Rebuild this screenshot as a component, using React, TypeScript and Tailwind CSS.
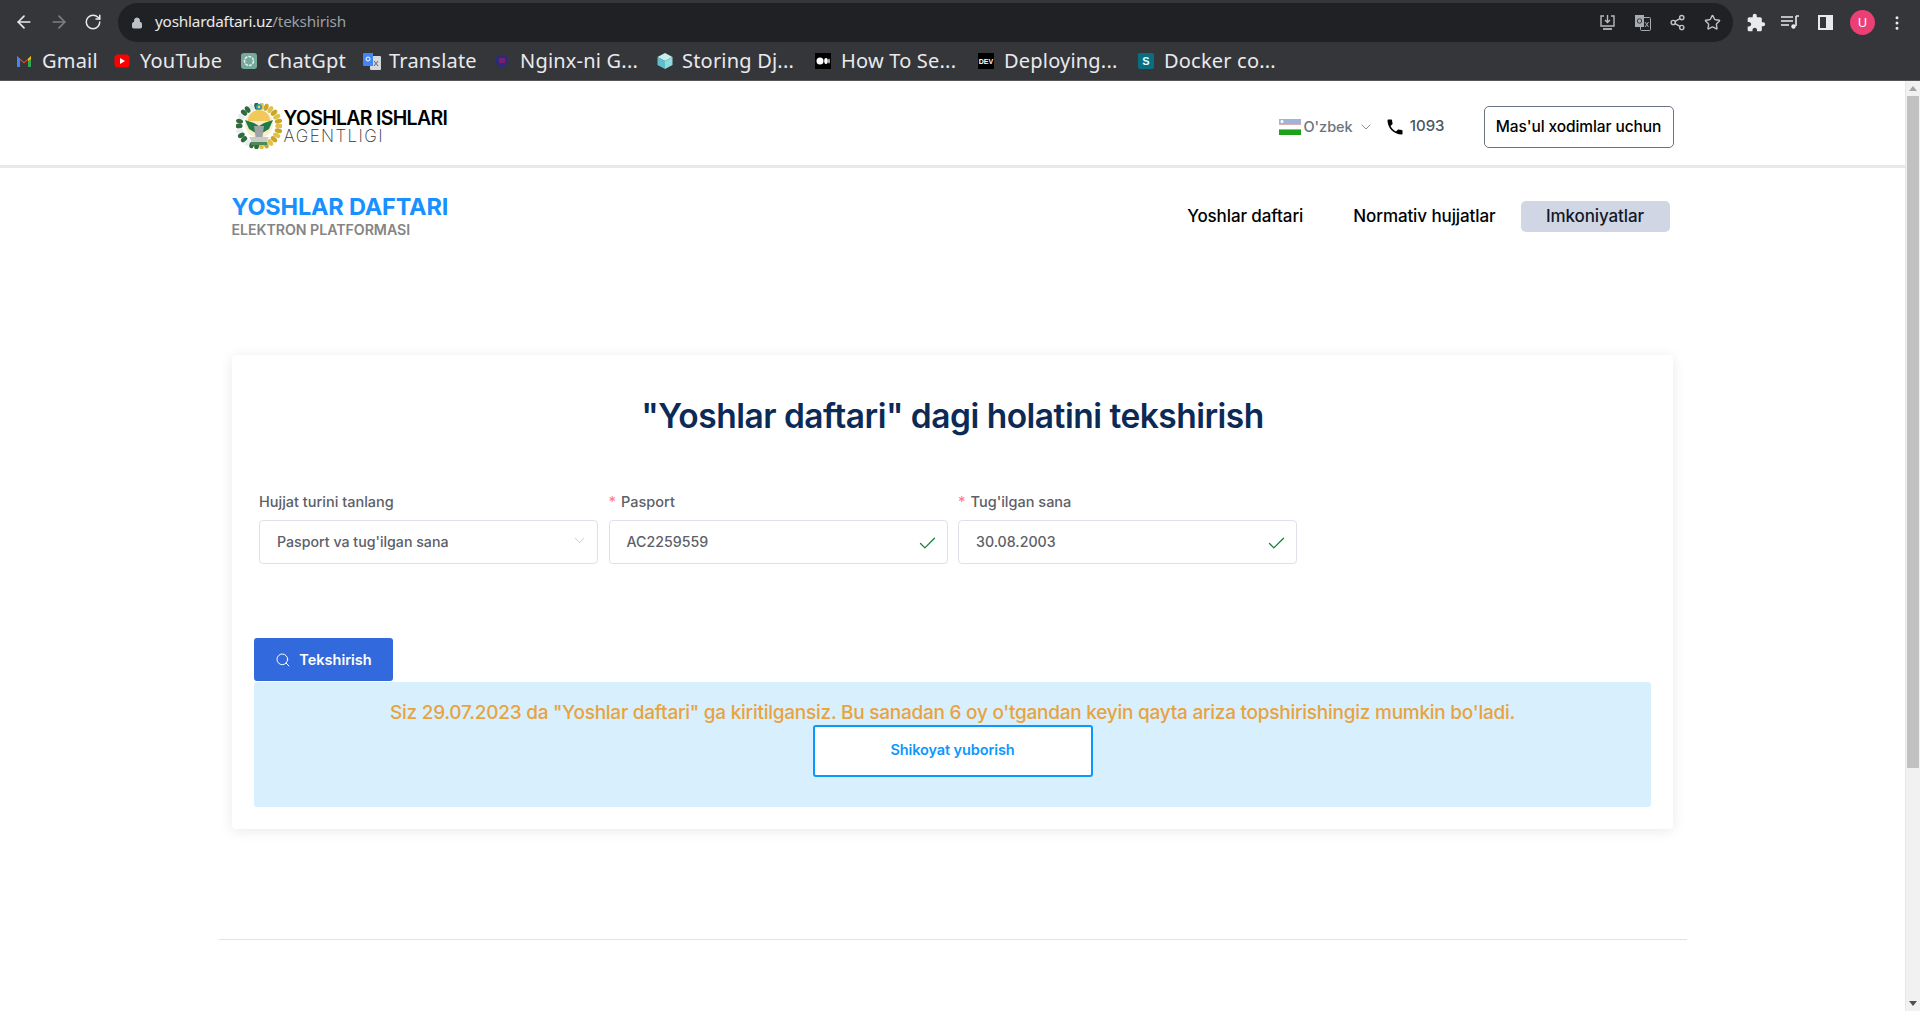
import { ArrowLeft, ArrowRight, RotateCw, Lock, Share2, Star, MoreVertical, ChevronDown, Search, Check } from 'lucide-react';
import { MdPhone, MdExtension } from 'react-icons/md';

/* ── Browser chrome ── */
const BOOKMARKS = [
  { label: 'Gmail', icon: <GmailIcon />, w: 'w-[98px]' },
  { label: 'YouTube', icon: <YoutubeIcon />, w: 'w-[127px]' },
  { label: 'ChatGpt', icon: <GptIcon />, w: 'w-[122px]' },
  { label: 'Translate', icon: <TranslateIcon />, w: 'w-[131px]' },
  { label: 'Nginx-ni G...', icon: <NginxIcon />, w: 'w-[162px]' },
  { label: 'Storing Dj...', icon: <CubeIcon />, w: 'w-[159px]' },
  { label: 'How To Se...', icon: <MediumIcon />, w: 'w-[163px]' },
  { label: 'Deploying...', icon: <DevIcon />, w: 'w-[160px]' },
  { label: 'Docker co...', icon: <StoringIcon />, w: 'w-[150px]' },
];

function GmailIcon() {
  return (
    <svg width="16" height="14" viewBox="0 0 16 14">
      <path d="M1 13V2l7 6 7-6v11h-3V6L8 9.5 4 6v7z" fill="#ea4335" />
      <path d="M1 13V2l3 3v8z" fill="#4285f4" />
      <path d="M15 13V2l-3 3v8z" fill="#34a853" />
      <path d="M12 5l3-3v3l-3 2z" fill="#fbbc04" />
    </svg>
  );
}

function YoutubeIcon() {
  return (
    <svg width="16" height="14" viewBox="0 0 16 14">
      <rect x="0.5" y="0.5" width="15" height="13" rx="3.5" fill="#f00" />
      <path d="M6 4l5 3-5 3z" fill="#fff" />
    </svg>
  );
}

function GptIcon() {
  return (
    <svg width="16" height="16" viewBox="0 0 16 16">
      <rect width="16" height="16" rx="3" fill="#74aa9c" />
      <circle cx="8" cy="8" r="4.5" fill="none" stroke="#e4efec" strokeWidth="1.6" strokeDasharray="3 1" />
    </svg>
  );
}

function TranslateIcon() {
  return (
    <svg width="18" height="17" viewBox="0 0 18 17">
      <rect x="7" y="3" width="11" height="14" rx="1" fill="#d5d8dc" />
      <path d="M1 0h9v13H1a1 1 0 0 1-1-1V1a1 1 0 0 1 1-1z" fill="#4285f4" />
      <circle cx="5" cy="6" r="2" fill="none" stroke="#fff" strokeWidth="1" />
      <path d="M11 8l4 5M15 8l-4 5" stroke="#5f6368" strokeWidth="1" />
    </svg>
  );
}

function NginxIcon() {
  return (
    <svg width="16" height="16" viewBox="0 0 16 16">
      <path d="M8 2c3 0 6 1.500 6 5s-2 7-6 7-6-3-6-7 3-5 6-5z" fill="#2b2a80" />
      <rect x="5" y="5" width="6" height="5" fill="#7a1f6e" />
    </svg>
  );
}

function CubeIcon() {
  return (
    <svg width="18" height="18" viewBox="0 0 18 18">
      <path d="M9 1l7.500 4L9 9 1.500 5z" fill="#c9eef0" />
      <path d="M1.500 5L9 9v8l-7.500-4z" fill="#5cc1cc" />
      <path d="M16.500 5L9 9v8l7.500-4z" fill="#8fdbe0" />
    </svg>
  );
}

function MediumIcon() {
  return (
    <svg width="16" height="16" viewBox="0 0 16 16">
      <rect width="16" height="16" fill="#000" />
      <ellipse cx="5" cy="8" rx="3.500" ry="3.500" fill="#fff" />
      <ellipse cx="11" cy="8" rx="1.800" ry="3" fill="#fff" />
      <ellipse cx="14" cy="8" rx="0.700" ry="2.500" fill="#fff" />
    </svg>
  );
}

function DevIcon() {
  return (
    <div className="flex h-[16px] w-[16px] items-center justify-center bg-black font-['Liberation_Sans',sans-serif] text-[7px] font-bold leading-none text-white">
      DEV
    </div>
  );
}

function StoringIcon() {
  return (
    <div className="flex h-[16px] w-[16px] items-center justify-center rounded-[2px] bg-[#0b6e80] font-['Liberation_Sans',sans-serif] text-[11px] font-bold leading-none text-[#dff]">
      S
    </div>
  );
}

function InstallIcon() {
  return (
    <svg width="17" height="17" viewBox="0 0 17 17" fill="none" stroke="#b6b9bd" strokeWidth="1.400">
      <path d="M5 2H2v10h13V2h-3" />
      <path d="M8.500 1v7M6 6l2.500 2.500L11 6" />
      <path d="M4 15h9" strokeWidth="1.800" />
    </svg>
  );
}

function TranslatePageIcon() {
  return (
    <svg width="17" height="17" viewBox="0 0 17 17">
      <rect x="6.500" y="3.500" width="10" height="13" rx="1" fill="none" stroke="#a8abaf" strokeWidth="1" />
      <path d="M1 1h9v12H1z" fill="#a8abaf" />
      <circle cx="5.500" cy="7" r="2.200" fill="none" stroke="#35363a" strokeWidth="1" />
      <path d="M11 8l3.500 5M14.500 8L11 13" stroke="#a8abaf" strokeWidth="1" />
    </svg>
  );
}

function MediaIcon() {
  return (
    <svg width="18" height="15" viewBox="0 0 18 15" fill="none" stroke="#e8eaed" strokeWidth="1.600">
      <path d="M0 2h12M0 6h12M0 10h8" />
      <path d="M15 1h3M15 1v10" />
      <circle cx="12.500" cy="11.500" r="2.200" fill="#e8eaed" stroke="none" />
    </svg>
  );
}

function BrowserChrome() {
  return (
    <div className="h-[81px] shrink-0 border-b border-[#55565a] bg-[#35363a] font-['Noto_Sans',sans-serif]">
      <div className="flex h-[42px] items-center pt-[3px]">
        <div className="mt-[-2px] flex w-[118px] shrink-0 items-center gap-[15px] pl-[14px]">
          <ArrowLeft size={20} color="#e8eaed" />
          <ArrowRight size={20} color="#7d7f83" />
          <RotateCw size={18} color="#e8eaed" />
        </div>
        <div className="flex h-[39px] w-[1615px] shrink-0 items-center rounded-full bg-[#202124] pl-[13px] pr-[12px]">
          <Lock size={12} color="#bdc1c6" fill="#bdc1c6" />
          <span className="ml-[12px] mt-[-2px] text-[15.300px] tracking-[-0.2px] text-[#e8eaed]">
            yoshlardaftari.uz<span className="text-[#9aa0a6]">/tekshirish</span>
          </span>
          <div className="ml-auto flex items-center gap-[18px]">
            <InstallIcon />
            <TranslatePageIcon />
            <Share2 size={17} color="#bdc1c6" />
            <Star size={17} color="#bdc1c6" />
          </div>
        </div>
        <div className="flex flex-1 items-center pl-[13px]">
          <MdExtension size={20} color="#e8eaed" />
          <div className="ml-[15px]"><MediaIcon /></div>
          <div className="ml-[19px] h-[15px] w-[15px] border-[2px] border-r-[7px] border-[#e8eaed]" />
          <div className="ml-[17px] flex h-[25px] w-[25px] items-center justify-center rounded-full bg-[#ec3f76] text-[13px] text-white">U</div>
          <MoreVertical size={18} color="#e8eaed" className="ml-[13px]" />
        </div>
      </div>
      <div className="flex h-[38px] items-center pl-[16px]">
        {BOOKMARKS.map(b => (
          <div key={b.label} className={`flex items-center ${b.w}`}>
            <span className="flex w-[26px] shrink-0 items-center">{b.icon}</span>
            <span className="whitespace-nowrap text-[20px] leading-none tracking-[0.2px] text-[#e8eaed]">{b.label}</span>
          </div>
        ))}
      </div>
    </div>
  );
}

/* ── Site header ── */
const LEAVES = Array.from({ length: 13 }, (_, i) => {
  const a = (Math.PI * (i + 0.5)) / 13;
  return { dx: Math.sin(a) * 20, y: 23 - Math.cos(a) * 20, rot: (a * 180) / Math.PI };
});

function Emblem() {
  return (
    <svg width="46" height="46" viewBox="0 0 46 46">
      {LEAVES.map((l, i) => (
        <g key={i}>
          <ellipse cx={23 - l.dx} cy={l.y} rx="3.600" ry="2.400" fill={i % 3 === 1 ? '#e8ecef' : '#2f6b3c'} transform={`rotate(${-l.rot + 90} ${23 - l.dx} ${l.y})`} />
          <ellipse cx={23 + l.dx} cy={l.y} rx="3.800" ry="2.300" fill={i % 2 ? '#caa52c' : '#e0c14a'} transform={`rotate(${l.rot - 90} ${23 + l.dx} ${l.y})`} />
        </g>
      ))}
      <circle cx="23" cy="21" r="14" fill="#f8eec9" />
      <path d="M12 18a11 11 0 0 1 22 0z" fill="#f3c85a" />
      <path d="M9 17l9 3 5 3 5-3 9-3-4 9-10 6-10-6z" fill="#1f7a46" />
      <path d="M18 23h10l-1.500 11h-7z" fill="#9fa3a5" />
      <path d="M13 34h20l-3 5H16z" fill="#c8ccc9" />
      <path d="M15 39h16v3H15z" fill="#4f8a55" />
      <circle cx="23" cy="4" r="3" fill="#2f9bb3" />
      <circle cx="23" cy="4" r="1.200" fill="#f2d874" />
    </svg>
  );
}

function UzFlag() {
  return (
    <svg width="22" height="16" viewBox="0 0 22 16">
      <rect width="22" height="5.500" fill="#9fb4dc" />
      <rect y="5.500" width="22" height="5" fill="#fff" />
      <rect y="5" width="22" height="0.700" fill="#d59a9a" />
      <rect y="10" width="22" height="0.700" fill="#d59a9a" />
      <rect y="10.700" width="22" height="5.300" fill="#1aa31a" />
      <circle cx="3" cy="2.500" r="1.500" fill="#fff" />
    </svg>
  );
}

function TopHeader() {
  return (
    <div className="h-[87px] shrink-0 border-b-[3px] border-[#e8e8e8]">
      <div className="mx-auto flex h-full w-[1442px] items-center">
        <div className="ml-[4px] mt-[5px] flex items-center">
          <Emblem />
          <div className="ml-[2px] mt-[2px] flex flex-col">
            <span className="text-[19.500px] font-semibold leading-[19px] tracking-[-0.7px] text-black">YOSHLAR ISHLARI</span>
            <span className="text-[17px] font-extralight leading-[17px] tracking-[1.400px] text-[#333]">AGENTLIGI</span>
          </div>
        </div>
        <div className="ml-auto mt-[8px] flex items-center">
          <UzFlag />
          <span className="ml-[2px] text-[14.500px] font-medium text-[#6b7280]">O'zbek</span>
          <ChevronDown size={16} color="#8a8f98" strokeWidth={1.500} className="ml-[5px]" />
          <MdPhone size={20} color="#000" className="ml-[11px]" />
          <span className="ml-[5px] mt-[-2px] text-[15px] font-medium text-[#4b5563]">1093</span>
          <button className="ml-[39px] h-[42px] w-[190px] rounded-[5px] border border-[#6b7280] bg-white text-[15.500px] font-medium tracking-[-0.1px] text-black">
            Mas'ul xodimlar uchun
          </button>
        </div>
      </div>
    </div>
  );
}

function NavBar() {
  return (
    <div className="mx-auto flex h-[75px] w-[1442px] items-start pt-[25px]">
      <div className="flex flex-col">
        <span className="text-[23.500px] font-bold leading-[28px] tracking-[-0.2px] text-[#1890ff]">YOSHLAR DAFTARI</span>
        <span className="text-[14.200px] font-semibold leading-[18px] tracking-[-0.05px] text-[#858585]">ELEKTRON PLATFORMASI</span>
      </div>
      <div className="ml-auto mr-[4px] mt-[8px] flex items-center text-[17px] font-medium tracking-[-0.1px] text-black">
        <span className="mr-[50px]">Yoshlar daftari</span>
        <span className="mr-[25px]">Normativ hujjatlar</span>
        <span className="flex h-[31px] w-[149px] items-center justify-center rounded-[5px] bg-[#d1d6e4] text-[#111827]">Imkoniyatlar</span>
      </div>
    </div>
  );
}

/* ── Check form ── */
function Field({ label, value, required, select }: { label: string; value: string; required?: boolean; select?: boolean }) {
  return (
    <div className="w-[339px] shrink-0">
      <div className="mb-[9px] h-[18px] text-[14.500px] font-medium leading-[18px] text-[#5c6068]">
        {required && <span className="mr-[5px] text-[#ff7d85]">*</span>}
        {label}
      </div>
      <div className="flex h-[44px] items-center rounded-[4px] border border-[#dfe1ea] bg-white pl-[17px] pr-[9px] text-[14.200px] font-medium text-[#5c6068]">
        <span>{value}</span>
        {select
          ? <ChevronDown size={17} color="#c2c6d0" strokeWidth={1.300} className="ml-auto mt-[-4px]" />
          : <Check size={21} color="#15803d" strokeWidth={1.500} className="ml-auto mt-[3px]" />}
      </div>
    </div>
  );
}

function CheckCard() {
  return (
    <div className="mx-auto h-[474px] w-[1441px] rounded-[4px] bg-white px-[22px] pt-[41px] shadow-[0_2px_14px_rgba(0,0,0,0.09)]">
      <h1 className="text-center text-[33.500px] font-semibold leading-[40px] tracking-[-0.5px] text-[#0c2a56]">
        "Yoshlar daftari" dagi holatini tekshirish
      </h1>
      <div className="ml-[5px] mt-[57px] flex gap-[10.500px]">
        <Field label="Hujjat turini tanlang" value="Pasport va tug'ilgan sana" select />
        <Field label="Pasport" value="AC2259559" required />
        <Field label="Tug'ilgan sana" value="30.08.2003" required />
      </div>
      <button className="mt-[74px] flex h-[43px] w-[139px] items-center justify-center gap-[8px] rounded-[3px] bg-[#3269dc] text-[14.500px] font-semibold text-white">
        <Search size={16} strokeWidth={1.500} />
        Tekshirish
      </button>
      <div className="mt-[1px] flex h-[125px] w-[1397px] flex-col items-center rounded-[3px] bg-[#d8effe] pt-[18px]">
        <p className="text-[19px] font-medium leading-[25px] tracking-[-0.25px] text-[#e8a33d]">
          Siz 29.07.2023 da "Yoshlar daftari" ga kiritilgansiz. Bu sanadan 6 oy o'tgandan keyin qayta ariza topshirishingiz mumkin bo'ladi.
        </p>
        <button className="h-[52px] w-[280px] rounded-[3px] border-2 border-[#0a98ff] bg-white pb-[2px] text-[14.500px] font-semibold tracking-[-0.1px] text-[#0a98ff]">
          Shikoyat yuborish
        </button>
      </div>
    </div>
  );
}

function Scrollbar() {
  return (
    <div className="flex w-[15px] shrink-0 flex-col items-center border-l border-[#e7e7e7] bg-[#f1f1f1]">
      <div className="flex h-[15px] w-full items-center justify-center">
        <div className="h-0 w-0 border-x-[4px] border-b-[5px] border-x-transparent border-b-[#a3a3a3]" />
      </div>
      <div className="h-[672px] w-[12px] bg-[#c1c1c1]" />
      <div className="mt-auto flex h-[15px] w-full items-center justify-center">
        <div className="h-0 w-0 border-x-[4px] border-t-[5px] border-x-transparent border-t-[#505050]" />
      </div>
    </div>
  );
}

export default function App() {
  return (
    <div className="flex h-[1011px] w-full flex-col overflow-hidden bg-white font-['Inter',sans-serif]">
      <BrowserChrome />
      <div className="flex min-h-0 flex-1">
        <main className="min-w-0 flex-1">
          <TopHeader />
          <NavBar />
          <div className="pt-[112px]">
            <CheckCard />
          </div>
          <div className="mx-auto mt-[110px] h-[1px] w-[1468px] bg-[#c9e9ff]" />
        </main>
        <Scrollbar />
      </div>
    </div>
  );
}
